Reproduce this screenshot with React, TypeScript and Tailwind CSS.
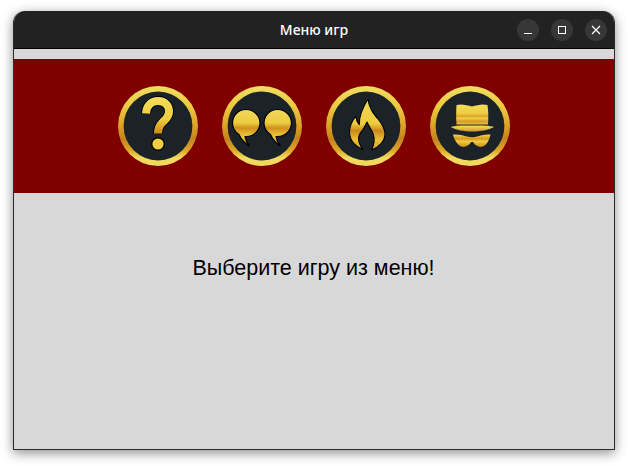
const Stops = ({ stops }: { stops: [number, string][] }) => (
  <>
    {stops.map(([o, c]) => (
      <stop key={o} offset={o} stopColor={c} />
    ))}
  </>
);

const G = ({ id, y1, y2, stops }: { id: string; y1: number; y2: number; stops: [number, string][] }) => (
  <linearGradient id={id} gradientUnits="userSpaceOnUse" x1="0" y1={y1} x2="0" y2={y2}>
    <Stops stops={stops} />
  </linearGradient>
);

const Medal = ({ id, children }: { id: string; children: React.ReactNode }) => (
  <button className="block w-20 h-20 shrink-0">
    <svg width="80" height="80" viewBox="0 0 80 80" className="block">
      <defs>
        <G
          id={`ring-${id}`}
          y1={0}
          y2={80}
          stops={[
            [0, "#f0dd64"],
            [0.25, "#eecb40"],
            [0.45, "#dfa92c"],
            [0.66, "#c6831a"],
            [0.8, "#dca628"],
            [0.9, "#f2da5c"],
            [1, "#eed85e"],
          ]}
        />
      </defs>
      <circle cx="40" cy="40" r="40" fill={`url(#ring-${id})`} />
      <circle cx="40" cy="40" r="34.4" fill="#1b2329" />
      {children}
    </svg>
  </button>
);

const qPath = "M28 27.5 C28.5 19 34 15 40 15 C47.5 15 51 20 51 25.5 C51 32 46 34.5 43.5 37.5 C41 40 40 43.5 40 47.5";

const Question = () => (
  <Medal id="q">
    <defs>
      <G id="fill-q" y1={11} y2={52} stops={[[0, "#f4de5a"], [0.55, "#eecb3e"], [0.85, "#cf8f1e"], [1, "#c8841a"]]} />
    </defs>
    <path d={qPath} fill="none" stroke="#000" strokeWidth="10" strokeLinejoin="round" />
    <circle cx="40" cy="58" r="6.8" fill="#000" />
    <path d={qPath} fill="none" stroke="url(#fill-q)" strokeWidth="8" strokeLinejoin="round" />
    <circle cx="40" cy="58" r="5.6" fill="#f0cf44" />
  </Medal>
);

const Quotes = () => {
  const d1 = "M24 23.5 C16 23.5 10.5 30 10.5 37 C10.5 42 13 46 17 48.5 C19 53 23 57.5 27.5 60 C25 57 23.5 54 23 50.5 C23.5 50.5 24 50.5 24.5 50.5 C32 50.5 38 44 38 37 C38 30 32 23.5 24 23.5 Z";
  const d2 = "M55.5 23.5 C47.5 23.5 42 30 42 37 C42 42 44.5 46 48.5 48.5 C50.5 53 54 57.5 58.5 60 C56 57 54.5 54 54 50.5 C54.5 50.5 55 50.5 55.5 50.5 C63.5 50.5 69.5 44 69.5 37 C69.5 30 63.5 23.5 55.5 23.5 Z";
  return (
    <Medal id="c">
      <defs>
        <G
          id="fill-c"
          y1={24}
          y2={60}
          stops={[
            [0, "#f2d856"],
            [0.36, "#eccc40"],
            [0.5, "#cf8f1e"],
            [0.65, "#e6b830"],
            [0.75, "#eec83c"],
            [1, "#a86c14"],
          ]}
        />
      </defs>
      <path d={d1} fill="url(#fill-c)" stroke="#000" strokeWidth="1.2" />
      <path d={d2} fill="url(#fill-c)" stroke="#000" strokeWidth="1.2" />
    </Medal>
  );
};

const Flame = () => (
  <Medal id="f">
    <defs>
      <G
        id="fill-f"
        y1={13}
        y2={64}
        stops={[
          [0, "#f2d856"],
          [0.48, "#eecc40"],
          [0.62, "#cb881c"],
          [0.8, "#eac036"],
          [1, "#d8a428"],
        ]}
      />
    </defs>
    <path
      d="M42 13 C43 22 47 27 52 33 C56 38 59 43 59 48 C59 55 53 61 45.5 64 C48 59 49 54 47.5 49 C46 44 43 41 41 36 C39.5 39 37.5 43 36 45 C33 48 32 52 33 56 C34 59 35 61 36.7 63.5 C30 61 23.5 55 23.5 46 C23.5 40 26 35 30 30 C30 33 31 36 33.3 38.7 C33 30 37 21 42 13 Z"
      fill="url(#fill-f)"
      stroke="#000"
      strokeWidth="1.1"
      strokeLinejoin="round"
    />
  </Medal>
);

const Spy = () => (
  <Medal id="s">
    <defs>
      <G
        id="fill-crown"
        y1={18}
        y2={39}
        stops={[
          [0, "#f4de5a"],
          [0.45, "#eecc40"],
          [0.58, "#dca226"],
          [0.68, "#f0d04c"],
          [0.82, "#d89c24"],
          [1, "#ecc63a"],
        ]}
      />
      <G id="fill-brim" y1={40} y2={46} stops={[[0, "#f2d854"], [1, "#d09220"]]} />
      <G
        id="fill-glasses"
        y1={49}
        y2={61}
        stops={[
          [0, "#f0d048"],
          [0.3, "#d69a22"],
          [0.55, "#f0cc44"],
          [1, "#c8881c"],
        ]}
      />
    </defs>
    <path d="M26.5 19 C31 17.5 37 19 42 20.5 C47 19 53 17.5 57.5 19 C58.5 26 58.5 32 58 38.5 L26.5 38.5 C26 32 26 26 26.5 19 Z" fill="url(#fill-crown)" />
    <path d="M20.7 41 C26 39.5 30 39.5 42 39.5 C54 39.5 59 39.5 64 41 C59 44 50 45.5 42 45.5 C34 45.5 26 44 20.7 41 Z" fill="url(#fill-brim)" />
    <path d="M23 48.5 C29 48 34 49.5 37 50.5 C40 51.5 44 51.5 47 50.5 C50 49.5 55 48 60.5 48.5 C59.5 53 57.5 58.5 53 60.5 C49 62 45 59.5 43.5 56.5 C42.8 55.5 41.5 55.5 40.8 56.5 C39 59.5 35 62 31 60.5 C27 58.5 24 53 23 48.5 Z" fill="url(#fill-glasses)" />
  </Medal>
);

export default function App() {
  return (
    <div className="w-[628px] h-[466px] bg-white pt-[11px] px-[13px] font-['Liberation_Sans',sans-serif] overflow-hidden">
      <div className="w-[602px] h-[439px] flex flex-col rounded-t-[12px] overflow-hidden border-x border-b border-[#2b2b2b] bg-[#d8d8d8] shadow-[0_3px_12px_rgba(0,0,0,0.45)]">
        <header className="relative h-[38px] shrink-0 bg-[#222222] border-b border-black flex items-center justify-center">
          <span className="text-white text-[14px] font-medium font-['Noto_Sans',sans-serif]">Меню игр</span>
          <div className="absolute right-[7px] top-[8px] flex gap-3">
            <div className="w-[22px] h-[22px] rounded-full bg-[#373737] flex items-center justify-center">
              <svg width="10" height="10" viewBox="0 0 10 10"><rect x="1" y="8" width="8" height="1" fill="#fff" /></svg>
            </div>
            <div className="w-[22px] h-[22px] rounded-full bg-[#373737] flex items-center justify-center">
              <svg width="10" height="10" viewBox="0 0 10 10"><rect x="1.5" y="1.5" width="7" height="7" fill="none" stroke="#fff" /></svg>
            </div>
            <div className="w-[22px] h-[22px] rounded-full bg-[#373737] flex items-center justify-center">
              <svg width="10" height="10" viewBox="0 0 10 10"><path d="M1 1 L9 9 M9 1 L1 9" stroke="#fff" strokeWidth="1.2" /></svg>
            </div>
          </div>
        </header>
        <div className="h-[10px] shrink-0" />
        <nav className="h-[134px] shrink-0 bg-[#800000] flex items-center justify-center gap-6">
          <Question />
          <Quotes />
          <Flame />
          <Spy />
        </nav>
        <main className="flex-1 flex justify-center pt-[63px]">
          <p className="text-[21.5px] leading-[25px] text-black pr-px">Выберите игру из меню!</p>
        </main>
      </div>
    </div>
  );
}
